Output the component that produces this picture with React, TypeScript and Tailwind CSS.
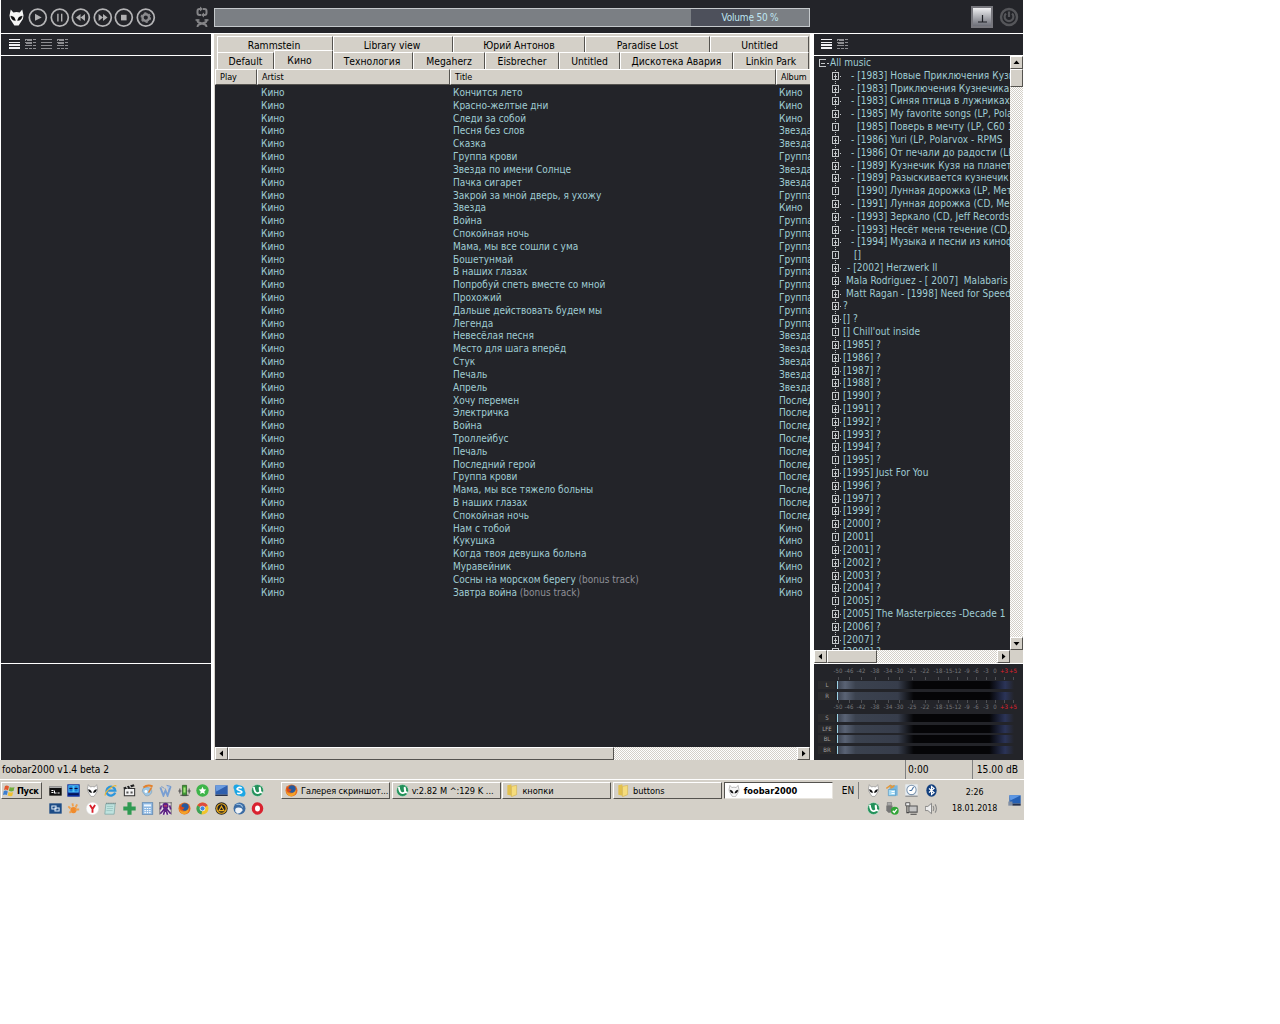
import type { ReactNode } from "react";

const tracks: [string, string, string?][] = [
  ["Кончится лето", "Кино"],
  ["Красно-желтые дни", "Кино"],
  ["Следи за собой", "Кино"],
  ["Песня без слов", "Звезда"],
  ["Сказка", "Звезда"],
  ["Группа крови", "Группа"],
  ["Звезда по имени Солнце", "Звезда"],
  ["Пачка сигарет", "Звезда"],
  ["Закрой за мной дверь, я ухожу", "Группа"],
  ["Звезда", "Кино"],
  ["Война", "Группа"],
  ["Спокойная ночь", "Группа"],
  ["Мама, мы все сошли с ума", "Группа"],
  ["Бошетунмай", "Группа"],
  ["В наших глазах", "Группа"],
  ["Попробуй спеть вместе со мной", "Группа"],
  ["Прохожий", "Группа"],
  ["Дальше действовать будем мы", "Группа"],
  ["Легенда", "Группа"],
  ["Невесёлая песня", "Звезда"],
  ["Место для шага вперёд", "Звезда"],
  ["Стук", "Звезда"],
  ["Печаль", "Звезда"],
  ["Апрель", "Звезда"],
  ["Хочу перемен", "Послед"],
  ["Электричка", "Послед"],
  ["Война", "Послед"],
  ["Троллейбус", "Послед"],
  ["Печаль", "Послед"],
  ["Последний герой", "Послед"],
  ["Группа крови", "Послед"],
  ["Мама, мы все тяжело больны", "Послед"],
  ["В наших глазах", "Послед"],
  ["Спокойная ночь", "Послед"],
  ["Нам с тобой", "Кино"],
  ["Кукушка", "Кино"],
  ["Когда твоя девушка больна", "Кино"],
  ["Муравейник", "Кино"],
  ["Сосны на морском берегу", "Кино", "(bonus track)"],
  ["Завтра война", "Кино", "(bonus track)"],
];

// indent, label, narrow expander
const tree: [string, string, boolean?][] = [
  ["pl-[8px]", "- [1983] Новые Приключения Кузн"],
  ["pl-[8px]", "- [1983] Приключения Кузнечика"],
  ["pl-[8px]", "- [1983] Синяя птица в лужниках"],
  ["pl-[8px]", "- [1985] My favorite songs (LP, Pola"],
  ["pl-[14px]", "[1985] Поверь в мечту (LP, С60 1", true],
  ["pl-[8px]", "- [1986] Yuri (LP, Polarvox - RPMS"],
  ["pl-[8px]", "- [1986] От печали до радости (LP"],
  ["pl-[8px]", "- [1989] Кузнечик Кузя на планете"],
  ["pl-[8px]", "- [1989] Разыскивается кузнечик"],
  ["pl-[14px]", "[1990] Лунная дорожка (LP, Мет", true],
  ["pl-[8px]", "- [1991] Лунная дорожка (CD, Me"],
  ["pl-[8px]", "- [1993] Зеркало (CD, Jeff Records"],
  ["pl-[8px]", "- [1993] Несёт меня течение (CD,"],
  ["pl-[8px]", "- [1994] Музыка и песни из киноф"],
  ["pl-[11px]", "[]", true],
  ["pl-[4px]", "- [2002] Herzwerk II"],
  ["pl-[3px]", "Mala Rodriguez - [ 2007]  Malabaris"],
  ["pl-[3px]", "Matt Ragan - [1998] Need for Speed"],
  ["pl-0", "?"],
  ["pl-0", "[] ?"],
  ["pl-0", "[] Chill'out inside", true],
  ["pl-0", "[1985] ?"],
  ["pl-0", "[1986] ?"],
  ["pl-0", "[1987] ?"],
  ["pl-0", "[1988] ?"],
  ["pl-0", "[1990] ?", true],
  ["pl-0", "[1991] ?"],
  ["pl-0", "[1992] ?"],
  ["pl-0", "[1993] ?"],
  ["pl-0", "[1994] ?"],
  ["pl-0", "[1995] ?", true],
  ["pl-0", "[1995] Just For You"],
  ["pl-0", "[1996] ?"],
  ["pl-0", "[1997] ?"],
  ["pl-0", "[1999] ?"],
  ["pl-0", "[2000] ?"],
  ["pl-0", "[2001]", true],
  ["pl-0", "[2001] ?"],
  ["pl-0", "[2002] ?"],
  ["pl-0", "[2003] ?"],
  ["pl-0", "[2004] ?"],
  ["pl-0", "[2005] ?", true],
  ["pl-0", "[2005] The Masterpieces -Decade 1"],
  ["pl-0", "[2006] ?"],
  ["pl-0", "[2007] ?"],
  ["pl-0", "[2008] ?"],
];

const raised = "bg-[#d4d0c8] border border-t-white border-l-white border-r-[#55534f] border-b-[#55534f]";
const dither = "bg-[repeating-conic-gradient(#ffffff_0_25%,#d4d0c8_0_50%)] bg-[length:2px_2px]";

function AlienHead() {
  return (
    <>
      <path d="M2.6 .5L5 3.4Q8 2.4 11 3.4L13.4 .5L14.6 6Q14.6 9 12.6 11.5L10 15.6H6L3.4 11.5Q1.4 9 1.4 6Z" />
      <path d="M2.6 6.6Q6.6 7 7 10.9Q3.4 11 2.6 6.6ZM13.4 6.6Q9.400 7 9 10.9Q12.6 11 13.4 6.6Z" fill="#0c0c0e" stroke="#0c0c0e" strokeWidth=".4" />
    </>
  );
}

function Alien({ size, outline }: { size: number; outline?: boolean }) {
  return (
    <svg width={size} height={size} viewBox="0 0 16 16" className="shrink-0" fill="#f6f6f6" stroke={outline ? "#aaa" : "none"}>
      <AlienHead />
    </svg>
  );
}

function RoundButton({ children }: { children: ReactNode }) {
  return (
    <svg width="21.6" height="20" viewBox="0 0 21.6 20" className="shrink-0">
      <circle cx="10.8" cy="9.6" r="8.5" fill="none" stroke="#b4b4b6" strokeWidth="1.7" />
      <g fill="#b0b0b2" transform="translate(0 -.4)">{children}</g>
    </svg>
  );
}

function Lines({ bright, split }: { bright?: boolean; split?: boolean }) {
  return (
    <svg width="16" height="12" viewBox="0 0 16 12" shapeRendering="crispEdges" fill={bright ? "#f1f1f4" : "#8d8d91"}>
      {split ? (
        <path d="M0 1h7v1H0zM8 1h3v1H8zM0 2h1v1H0zM2 2h5v1H2zM0 4h7v1H0zM8 4h3v1H8zM1 5h6v1H1zM0 7h7v1H0zM8 7h3v1H8zM0 10h3v1H0zM4 10h3v1H4zM8 10h3v1H8z" />
      ) : (
        <path d={bright ? "M0 1h11v1H0zM0 4h11v1H0zM0 6h11v2H0zM0 9h11v2H0z" : "M0 1h11v1H0zM0 4h11v1H0zM0 7h11v1H0zM0 10h11v1H0z"} />
      )}
    </svg>
  );
}

function Arrow({ dir }: { dir: "left" | "right" | "up" | "down" }) {
  const shapes = {
    left: "M7 2.5V8.5L3.5 5.5Z",
    right: "M4 2.5V8.5L7.5 5.5Z",
    up: "M2.5 7H8.5L5.5 3.5Z",
    down: "M2.5 4H8.5L5.5 7.5Z",
  };
  return (
    <div className={`w-[13px] h-[13px] shrink-0 ${raised}`}>
      <svg width="11" height="11" viewBox="0 0 11 11">
        <path d={shapes[dir]} fill="#000" />
      </svg>
    </div>
  );
}

function Toolbar() {
  return (
    <div className="h-[33px] flex items-center bg-[#232429] pl-[7px] shrink-0">
      <div className="pt-[2px]"><Alien size={17} /></div>
      <div className="flex ml-[2px] pt-[2px]">
        <RoundButton><path d="M8 6.2 L14.7 9.8 L8 13.2 Z" /></RoundButton>
        <RoundButton><path d="M8.2 6.2h1.4v7.6H8.2z M12 6.2h1.4v7.6H12z" /></RoundButton>
        <RoundButton><path d="M10.5 6.5v7L6 10Z M15 6.5v7L10.5 10Z" /></RoundButton>
        <RoundButton><path d="M6.6 6.5v7L11 10Z M11 6.5v7L15.6 10Z" /></RoundButton>
        <RoundButton><path d="M8 7.2h5.6v5.6H8z" /></RoundButton>
        <RoundButton>
          <circle cx="10.8" cy="10" r="3.3" fill="none" stroke="#8b8b8e" strokeWidth="2.4" />
          <circle cx="10.8" cy="10" r="4.7" fill="none" stroke="#8b8b8e" strokeWidth="1.2" strokeDasharray="2.5 2.42" />
        </RoundButton>
      </div>
      <svg width="14" height="22" viewBox="0 0 14 22" className="ml-[38px]" fill="none" stroke="#848487" strokeWidth="2">
        <path d="M6 9 H4.500 Q2.500 9 2.500 7 V5 Q2.500 3 4.500 3 H6 M8 3 H9.500 Q11.500 3 11.500 5 V7 Q11.500 9 9.500 9 H8" />
        <path d="M5 0.5 L8 3 L5 5.500 Z M9 6.500 L6 9 L9 11.500 Z" fill="#848487" stroke="none" />
        <path d="M2.5 13.500 V15 Q2.500 16 4 16.500 L10 18.500 Q11.500 19 11.500 21 M11.500 13.500 V15 Q11.500 16 10 16.500 L4 18.500 Q2.500 19 2.500 21" />
        <path d="M0.5 14 H4.500 M9.500 14 H13.500" strokeWidth="1.5" />
      </svg>
      <div className="ml-[5px] mt-[2px] w-[596px] h-[19px] border border-[#c5c9cc] bg-[#7b7f84] flex justify-end shrink-0">
        <div className="w-[59px] bg-[#4d505b] text-[#bfe6f2] text-[10px] leading-[18px] whitespace-nowrap pl-[31px] tracking-[-0.2px]">Volume 50 %</div>
        <div className="w-[59px]" />
      </div>
      <div className="ml-[161px] mt-[1px] w-[22px] h-[22px] border-2 border-[#77777d] bg-linear-to-b from-[#f0f0f2] to-[#6d6f78] shrink-0">
        <svg width="18" height="18" viewBox="0 0 18 18"><path d="M9.5 7V14M5 14H14" stroke="#1d1e24" strokeWidth="1.2" /></svg>
      </div>
      <svg width="20" height="20" viewBox="0 0 20 20" className="ml-[6px] mt-[1px]" fill="none" stroke="#55565a">
        <circle cx="10" cy="10" r="8" strokeWidth="2.4" />
        <path d="M7 6.5 A4.4 4.4 0 1 0 13 6.5 M10 4.5 V10" strokeWidth="2.2" />
      </svg>
    </div>
  );
}

function Tab({ w, children, active }: { w: string; children: ReactNode; active?: boolean }) {
  return (
    <div className={`${w} shrink-0 text-center border-t border-l border-white text-black text-[10.3px] whitespace-nowrap ${active ? "h-[19px] -mt-[2px] leading-[18px] bg-[#d4d0c8] border-r border-r-[#55534f]" : "h-[17px] leading-[17px] border-r border-r-[#55534f]"}`}>
      {children}
    </div>
  );
}

function Playlist() {
  return (
    <div className="w-[596px] flex flex-col bg-[#232429] border-l border-[#d4d0c8] overflow-hidden shrink-0">
      <div className="bg-[#d4d0c8] h-[35px] pl-[2px] pt-[2px] shrink-0">
        <div className="flex h-[16px]">
          <Tab w="w-[116px]"><span className="pr-[2px]">Rammstein</span></Tab>
          <Tab w="w-[120px]"><span className="pr-[2px]">Library view</span></Tab>
          <Tab w="w-[132px]">Юрий Антонов</Tab>
          <Tab w="w-[125px]">Paradise Lost</Tab>
          <Tab w="w-[99px]">Untitled</Tab>
        </div>
        <div className="flex h-[17px]">
          <Tab w="w-[57px]">Default</Tab>
          <Tab w="w-[59px]" active><span className="pr-[8px]">Кино</span></Tab>
          <Tab w="w-[80px]"><span className="pr-[2px]">Технология</span></Tab>
          <Tab w="w-[72px]">Megaherz</Tab>
          <Tab w="w-[74px]">Eisbrecher</Tab>
          <Tab w="w-[61px]">Untitled</Tab>
          <Tab w="w-[113px]">Дискотека Авария</Tab>
          <Tab w="w-[76px]">Linkin Park</Tab>
        </div>
      </div>
      <div className="flex h-[16px] text-[9px] leading-[14px] text-black shrink-0">
        <div className={`w-[42px] shrink-0 pl-1 ${raised}`}>Play</div>
        <div className={`w-[193px] shrink-0 pl-1 ${raised}`}>Artist</div>
        <div className={`w-[326px] shrink-0 pl-1 ${raised}`}>Title</div>
        <div className={`w-[40px] shrink-0 pl-[4px] tracking-[-0.1px] ${raised}`}>Album</div>
      </div>
      <div className="flex-1 pt-[2px] text-[#a0cdd4] text-[10px] whitespace-nowrap">
        {tracks.map(([title, album, note], i) => (
          <div key={i} className="flex h-[12.82px] leading-[12.82px]">
            <div className="w-[46px] shrink-0" />
            <div className="w-[192px] shrink-0">Кино</div>
            <div className="w-[326px] shrink-0">
              {title} {note && <span className="text-[#8f9097]">{note}</span>}
            </div>
            <div>{album}</div>
          </div>
        ))}
      </div>
      <div className={`flex h-[13px] shrink-0 ${dither}`}>
        <Arrow dir="left" />
        <div className={`w-[386px] ${raised}`} />
        <div className="flex-1" />
        <Arrow dir="right" />
      </div>
    </div>
  );
}

function Expander({ thin }: { thin?: boolean }) {
  return (
    <svg width="11" height="13" viewBox="0 0 11 13" className="shrink-0" shapeRendering="crispEdges" fill="none" stroke="#c3c6c9">
      <path d="M3.5 0V2M3.5 11V13" strokeDasharray="1 1" />
      <rect x="0.5" y="2.5" width="6" height="7" />
      <path d={thin ? "M3.5 4V8" : "M3.5 4V9M2 6.5H5M8 6.5H9"} />
    </svg>
  );
}

function AlbumTree() {
  return (
    <div className="h-[594px] flex shrink-0">
      <div className="w-[196px] overflow-hidden pt-px text-[#a0cdd4] text-[10px] whitespace-pre tracking-[0.05px]">
        <div className="flex h-[12.82px] leading-[12.82px] pl-[5px]">
          <svg width="11" height="13" viewBox="0 0 11 13" shapeRendering="crispEdges" fill="none" stroke="#c3c6c9">
            <path d="M7 2.5H0.5V9.5H7M2 6.5H6M8 6.5H10" />
          </svg>
          All music
        </div>
        {tree.map(([indent, label, thin], i) => (
          <div key={i} className="flex h-[12.82px] leading-[12.82px] pl-[18px]">
            <Expander thin={thin} />
            <span className={indent}>{label}</span>
          </div>
        ))}
      </div>
      <div className={`w-[13px] flex flex-col ${dither}`}>
        <Arrow dir="up" />
        <div className={`h-[18px] ${raised}`} />
        <div className="flex-1" />
        <Arrow dir="down" />
      </div>
    </div>
  );
}

const scale: [number, string][] = [
  [24, "-50"], [35, "-46"], [47, "-42"], [61, "-38"], [74, "-34"], [85, "-30"], [98, "-25"], [111, "-22"],
  [124, "-18"], [134, "-15"], [143, "-12"], [153, "-9"], [162, "-6"], [172, "-3"], [181, "0"], [190, "+3"], [199, "+5"],
];
const meters: [number, string][] = [[17, "L"], [28, "R"], [50, "S"], [61, "LFE"], [71, "BL"], [82, "BR"]];

function PeakMeter() {
  return (
    <svg width="209" height="96" viewBox="0 0 209 96" className="block bg-[#232429]" fontSize="6">
      <defs>
        <linearGradient id="level">
          <stop offset="0" stopColor="#3d4452" />
          <stop offset="0.04" stopColor="#5a6375" />
          <stop offset="0.1" stopColor="#3b424f" />
          <stop offset="0.34" stopColor="#373d4b" />
          <stop offset="0.43" stopColor="#050507" />
          <stop offset="0.86" stopColor="#050507" />
          <stop offset="0.95" stopColor="#2b3458" />
          <stop offset="1" stopColor="#232429" />
        </linearGradient>
      </defs>
      {[9, 45].map((y) =>
        scale.map(([x, label]) => (
          <text key={`${y}${label}`} x={x} y={y} textAnchor="middle" fill={label[0] === "+" ? "#e0202c" : "#77787b"}>{label}</text>
        ))
      )}
      {scale.map(([x, label]) => (
        <path key={label} d={`M${x}.5 13V16M${x}.5 36V39`} stroke="#4e4f53" />
      ))}
      {meters.map(([y, label]) => (
        <g key={label}>
          <rect x="4" y={y} width="17" height="8" fill="#2a2a2c" />
          <text x="13" y={y + 6} textAnchor="middle" fill="#a0a0a0">{label}</text>
          <rect x="24" y={y} width="176" height="8" fill="url(#level)" />
          <rect x="23" y={y} width="1" height="8" fill="#9bd3e4" />
        </g>
      ))}
    </svg>
  );
}

const icons: Record<string, ReactNode> = {
  cmd: <><path d="M0 2h12v9H0z" fill="#111" /><path d="M0 2h12v1.5H0z" fill="#bbb" /><path d="M2 6h2M2 8h2M5 6v2.5h2M8 8.5h2" stroke="#fff" /></>,
  far: <><path d="M0 0h12v12H0z" fill="#0b2b9b" /><path d="M1.5 1.5h4v6h-4zM6.5 1.5h4v6h-4z" fill="#1479d8" stroke="#4fc2f4" /><path d="M1 9.5h10M2 4h3M7 4h3" stroke="#07103f" /></>,
  alien: <g transform="scale(.75)" fill="#fff" stroke="#999"><AlienHead /></g>,
  ie: <><path d="M10.5 8A4.3 4.3 0 1 1 10.7 6.2H3" fill="none" stroke="#2d96dc" strokeWidth="2.2" /><path d="M1 11Q0 8 6 3.5Q11 0 11.5 2" fill="none" stroke="#e9b73c" strokeWidth="1.2" /></>,
  film: <><path d="M1 4h10v7H1z" fill="#f2f2f2" stroke="#333" /><path d="M0 3l10-3 1 2-10 3z" fill="#222" /><path d="M3 2l1 2M6 1l1 2" stroke="#fff" /><path d="M3 7h2v2H3zM7 7h2v2H7z" fill="#555" /></>,
  paint: <><path d="M1 7Q1 2 6 3T10 8Q8 12 4 11Z" fill="#9cc7e6" stroke="#7899b4" strokeWidth=".6" /><path d="M2 3Q6 0 11 2" stroke="#e3812c" strokeWidth="1.8" fill="none" /><path d="M7 8l3-5" stroke="#e3812c" strokeWidth="1.5" /><circle cx="4.5" cy="7" r="1.4" fill="#fff" /></>,
  word: <><path d="M1 3l3 8 2-5 2 5 3-9" fill="none" stroke="#7a9fd2" strokeWidth="1.8" /><path d="M2 2l3 2M7 1l4 1-2 4" fill="#a9c4e8" stroke="#6c90c5" strokeWidth=".8" /></>,
  battery: <><path d="M4 1h4v10H4z" fill="#3f9b33" stroke="#245c1d" strokeWidth=".7" /><path d="M0 6h3v1H0zM9 6h3v1H9zM1 4h1v5H1zM10 4h1v5h-1zM2 10h8v1H2z" fill="#4c4c4c" /><path d="M5 3h2v5H5z" fill="#a8e47d" /></>,
  star: <><circle cx="6" cy="6" r="6" fill="#3eb54a" /><path d="M6 2.4l1.1 2.4 2.5.3-1.8 1.8.5 2.6L6 8.2 3.7 9.5l.5-2.6L2.4 5.1l2.5-.3z" fill="#fff" /></>,
  desktop: <><path d="M0 1h12v9H0z" fill="#2f5fae" /><path d="M0 1h12L1 7z" fill="#6b9ce0" /><path d="M0 10h12v1.3H0z" fill="#222b45" /></>,
  screen: <><path d="M1 1h11v8H1z" fill="#2560b4" /><path d="M1 1h11L2 6z" fill="#5d97e4" /><path d="M0 7h4v4H0z" fill="#7f8da3" /><path d="M4 9h8v2H4z" fill="#25304c" /></>,
  skype: <><circle cx="6" cy="6" r="5" fill="#1aa6e5" /><circle cx="3.2" cy="3.2" r="3" fill="#1aa6e5" /><circle cx="8.8" cy="8.8" r="3" fill="#1aa6e5" /><path d="M8.2 3.8Q6 2.3 4.2 3.6T6 6T7.6 8.3T3.8 8.2" fill="none" stroke="#fff" strokeWidth="1.5" /></>,
  torrent: <><circle cx="6" cy="6" r="5.8" fill="#23915a" stroke="#d9efe2" strokeWidth=".5" /><path d="M2.5 2.5Q3 9 6.5 8.5T8 2.5M8 3Q8 8.5 11 8" fill="none" stroke="#fff" strokeWidth="1.7" /></>,
  vnc: <><path d="M0 1h12v10H0z" fill="#1d4c86" /><path d="M2.5 3.5h4v3h-4zM5.5 5.5h4v3h-4z" fill="#1d4c86" stroke="#dde9f5" /></>,
  paw: <><circle cx="6" cy="7.5" r="3" fill="#f08b2c" /><path d="M1 4l2 2M5 1l.5 3M9.5 2L8 5M11.5 7H8M2 10l2-1" stroke="#f0a04c" strokeWidth="1.8" /></>,
  yandex: <><circle cx="6" cy="6" r="6" fill="#fff" stroke="#ddd" strokeWidth=".5" /><path d="M3.5 2.5L6 6.5V10M8.5 2.5L6 6.5" fill="none" stroke="#d8202b" strokeWidth="1.8" /></>,
  notepad: <><path d="M1.5 1.5h9L9.5 11.5h-9z" fill="#bfe3df" stroke="#79a3a2" strokeWidth=".7" /><path d="M2 1h9" stroke="#4e6b6b" strokeDasharray="1 1" /><path d="M2.5 4h6M2.5 6h6M2 8h6" stroke="#8cbab6" strokeWidth=".6" /></>,
  plus: <path d="M4 0h4v4h4v4H8v4H4V8H0V4h4z" fill="#2f9a52" />,
  calc: <><path d="M1 0h10v12H1z" fill="#8eb8e2" stroke="#567fa9" strokeWidth=".7" /><path d="M2.5 2h7v2h-7z" fill="#eef7ff" /><path d="M3 6h6M3 8h6M3 10h6" stroke="#fff" strokeWidth="1.2" strokeDasharray="1.4 .9" /></>,
  octopus: <><path d="M0 0h12v12H0z" fill="#ece7e8" /><path d="M0 .5h12M.5 0v12M11.5 0v12" stroke="#444" strokeWidth=".7" /><circle cx="6" cy="3.5" r="3" fill="#5c2183" /><path d="M6 5L1 11M6 5l5 6M6 6l-2 6M6 6l2 6M2 3l-1 4M10 3l1 4" stroke="#5c2183" strokeWidth="1.6" /><path d="M4.5 3.5h3" stroke="#e8415a" /></>,
  firefox: <><circle cx="6" cy="6" r="5.8" fill="#e66a1c" /><circle cx="6.5" cy="4.5" r="3.6" fill="#27599e" /><path d="M.5 4Q1 9 5 9T10 5Q11 11 6 11.5T.5 4" fill="#f4a329" /><path d="M1 2q2 3 5 3-1 3-4 2z" fill="#d94a1a" /></>,
  chrome: <><circle cx="6" cy="6" r="5.8" fill="#f0c52d" /><path d="M1 3A5.8 5.8 0 0 1 11 3L6 6z" fill="#dd4b3e" /><path d="M1 3L6 6 5 11.8A5.8 5.8 0 0 1 1 3z" fill="#3ba25a" /><circle cx="6" cy="6" r="2.7" fill="#fff" /><circle cx="6" cy="6" r="2.1" fill="#4285d9" /></>,
  aimp: <><circle cx="6" cy="6" r="6" fill="#222" /><circle cx="6" cy="6" r="4.6" fill="none" stroke="#f0ae1c" strokeWidth="1.2" /><path d="M6 3.8L8.4 8H3.6z" fill="none" stroke="#f0ae1c" strokeWidth="1.1" /></>,
  bird: <><circle cx="6" cy="6" r="5.8" fill="#3c6ca4" /><path d="M2 9Q1 5 5 5T9 8Q7 11 4 11z" fill="#eef3f8" /><path d="M3 2q5-1 6 3" stroke="#9cc1e4" fill="none" /></>,
  opera: <ellipse cx="6" cy="6" rx="4" ry="4.4" fill="#fff" stroke="#d9222f" strokeWidth="3.2" />,
  folder: <><path d="M1 1l4-1v11l-4-1z" fill="#e2c04e" /><path d="M5 2l5-1v9l-5 2z" fill="#f5dc7c" stroke="#cfab45" strokeWidth=".5" /></>,
  sticky: <><path d="M3 1h8v10H3z" fill="#79b6dd" /><path d="M2 5h7v6H2z" fill="#a5dbf5" stroke="#4d8fbc" strokeWidth=".6" /><path d="M0 4l4-3 3 2M4 4l4-3" stroke="#e3973a" strokeWidth="1.5" fill="none" /><path d="M5 7h3M5 9h3" stroke="#fff" /></>,
  clock: <><path d="M0 0h12v12H0z" fill="#e6ecf1" /><circle cx="6" cy="5.5" r="4.5" fill="#fff" stroke="#7d95ae" /><path d="M6 6l2-3.5M6 6H4" stroke="#3e6b9c" /><path d="M0 11.5h12" stroke="#777" /></>,
  bluetooth: <><ellipse cx="6" cy="6" rx="5" ry="6" fill="#123f7e" /><path d="M3.5 4l5 4L6 10V2l2.5 2-5 4" fill="none" stroke="#fff" strokeWidth="1.1" /></>,
  usb: <><path d="M0 3h6v5L4 10H2L0 8z" fill="#757575" /><path d="M1 0h4v3H1z" fill="#aaa" stroke="#666" strokeWidth=".5" /><circle cx="8.2" cy="8.2" r="3.8" fill="#32a538" /><path d="M6.3 8.2l1.4 1.6 2.6-3.2" stroke="#fff" fill="none" strokeWidth="1.3" /></>,
  network: <><path d="M3.5 3.5h8v6h-8z" fill="#c4c4c4" stroke="#555" /><path d="M1.5 3v7h2M5 11.5h6" stroke="#444" fill="none" /><path d="M.4 .4h4v3h-4z" fill="#eee" stroke="#444" strokeWidth=".8" /></>,
  speaker: <><path d="M0 4h2.5L6 1v10L2.5 8H0z" fill="#eee" stroke="#777" strokeWidth=".8" /><path d="M7.5 3.5q1.5 2.5 0 5M9.5 2q2.5 4 0 8" stroke="#888" fill="none" /></>,
};

function Icon({ name }: { name: string }) {
  return <svg width="13" height="13" viewBox="-.3 -.3 12.6 12.6" className="shrink-0">{icons[name]}</svg>;
}

const quickLaunch = [
  ["cmd", "far", "alien", "ie", "film", "paint", "word", "battery", "star", "desktop", "skype", "torrent"],
  ["vnc", "paw", "yandex", "notepad", "plus", "calc", "octopus", "firefox", "chrome", "aimp", "bird", "opera"],
];
const tray = [
  ["alien", "sticky", "clock", "bluetooth"],
  ["torrent", "usb", "network", "speaker"],
];

function TaskButton({ icon, children }: { icon: string; children: ReactNode }) {
  return (
    <div className={`w-[109px] h-[17px] flex items-center gap-[3px] pl-[3px] shrink-0 whitespace-nowrap ${raised}`}>
      <Icon name={icon} />
      <span>{children}</span>
    </div>
  );
}

function Taskbar() {
  return (
    <div className="h-[41px] border-t border-white bg-[#d4d0c8] flex pt-[2px] pl-[1px] text-[9.2px] text-black shrink-0">
      <div className={`w-[41px] h-[17px] flex items-center pl-[1px] gap-[2px] font-bold text-[9.2px] tracking-[-0.3px] shrink-0 ${raised}`}>
        <svg width="12" height="12" viewBox="0 0 12 12" className="shrink-0">
          <path d="M2 1Q4 0 6 1.5L5 5.5Q3 4 1 5z" fill="#e2572b" />
          <path d="M6.8 2Q9 3 11.5 2L10.5 6Q8 7 5.8 5.8z" fill="#72ae3b" />
          <path d="M.8 6Q3 5 4.8 6.5L3.8 10Q2 9 0 10z" fill="#3c7fd0" />
          <path d="M5.6 7Q8 8 10.2 7L9.2 11Q7 11.5 4.6 10.5z" fill="#f1c232" />
        </svg>
        Пуск
      </div>
      <div className="ml-[7px] w-[221px] shrink-0 flex flex-col gap-[5px] pt-[2px]">
        {quickLaunch.map((row, i) => (
          <div key={i} className="flex gap-[5.4px]">
            {row.map((name) => <Icon key={name} name={name} />)}
          </div>
        ))}
      </div>
      <div className="ml-[11px] flex gap-[1.7px] shrink-0">
        <TaskButton icon="firefox"><span className="tracking-[-0.1px]">Галерея скриншот...</span></TaskButton>
        <TaskButton icon="torrent">v:2.82 M ^:129 K ...</TaskButton>
        <TaskButton icon="folder">кнопки</TaskButton>
        <TaskButton icon="folder">buttons</TaskButton>
        <div className="w-[109px] h-[17px] flex items-center gap-[4px] pl-[3px] bg-white border border-t-[#55534f] border-l-[#55534f] border-r-[#e8e5df] border-b-[#e8e5df] font-bold">
          <Alien size={12} outline />
          foobar2000
        </div>
      </div>
      <div className="ml-[9px] h-[17px] w-[17px] leading-[17px] border-r border-[#808080] text-[10px]">EN</div>
      <div className="ml-[8px] flex flex-col gap-[5px] pt-[2px] shrink-0">
        {tray.map((row, i) => (
          <div key={i} className="flex gap-[6.3px]">
            {row.map((name) => <Icon key={name} name={name} />)}
          </div>
        ))}
      </div>
      <div className="ml-[13px] w-[48px] text-center leading-[15.5px] pt-[3px] text-[8.8px] whitespace-nowrap">
        <div>2:26</div>
        <div>18.01.2018</div>
      </div>
      <div className="ml-[9px] pt-[12px]"><Icon name="screen" /></div>
    </div>
  );
}

export default function App() {
  return (
    <div className="w-[1280px] h-[1024px] bg-white overflow-hidden">
      <div className="w-[1024px] h-[820px] flex flex-col font-['DejaVu_Sans_Condensed','DejaVu_Sans',sans-serif] [font-stretch:condensed]">
        <div className="pl-px pr-px shrink-0"><Toolbar /></div>
        <div className="h-[727px] pt-px pl-px flex shrink-0">
          <div className="w-[210px] mr-[3px] flex flex-col gap-px shrink-0">
            <div className="h-[21px] bg-[#232429] flex pl-[8px] pt-[4px] shrink-0">
              <Lines bright /><Lines split /><Lines /><Lines split />
            </div>
            <div className="flex-1 bg-[#232429]" />
            <div className="h-[96px] bg-[#232429]" />
          </div>
          <Playlist />
          <div className="ml-[4px] w-[209px] flex flex-col">
            <div className="h-[21px] bg-[#232429] flex pl-[7px] pt-[4px] mb-px shrink-0">
              <Lines bright /><Lines split />
            </div>
            <div className="bg-[#232429]"><AlbumTree /></div>
            <div className={`flex h-[13px] mb-px shrink-0 ${dither}`}>
              <Arrow dir="left" />
              <div className={`w-[50px] ${raised}`} />
              <div className="flex-1" />
              <Arrow dir="right" />
              <div className="w-[13px] bg-[#d4d0c8]" />
            </div>
            <PeakMeter />
          </div>
        </div>
        <div className="h-[19px] bg-[#d4d0c8] flex text-[10.2px] leading-[20px] text-black pl-[2px] shrink-0">
          <div className="w-[904px] border-r border-[#808080] tracking-[-0.05px]">foobar2000 v1.4 beta 2</div>
          <div className="w-[67px] pl-[2px] border-r border-[#808080]">0:00</div>
          <div className="flex-1 text-right pr-[6px]">15.00 dB</div>
        </div>
        <Taskbar />
      </div>
    </div>
  );
}
